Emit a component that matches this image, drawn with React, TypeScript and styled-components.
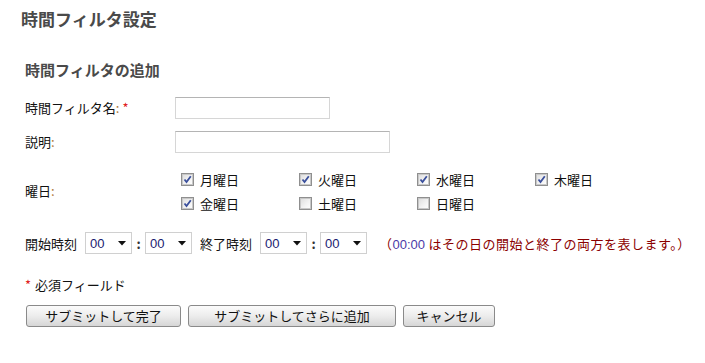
import React from "react";
import styled, { createGlobalStyle } from "styled-components";

const Global = createGlobalStyle`
  html, body { margin: 0; padding: 0; background: #fff; }
  body { font-family: "Noto Sans CJK JP", "Noto Sans", sans-serif; color: #000; }
`;

const Page = styled.div`
  width: 705px;
  height: 363px;
  box-sizing: border-box;
  padding: 9px 0 0 21px;
`;

const Title = styled.h1`
  margin: 0;
  font-size: 17px;
  line-height: 20px;
  font-weight: bold;
  color: #4a4a4a;
`;

const Section = styled.div`
  padding: 31px 0 0 4px;
`;

const SubTitle = styled.h2`
  margin: 0 0 17px 0;
  font-size: 15px;
  line-height: 20px;
  font-weight: bold;
  color: #4a4a4a;
`;

const Row = styled.div<{ $mb: number; $align?: string }>`
  display: grid;
  grid-template-columns: 150px auto;
  align-items: ${(p) => p.$align || "center"};
  margin-bottom: ${(p) => p.$mb}px;
`;

const Label = styled.div`
  font-size: 13px;
  line-height: 18px;
  color: #111;
`;

const Colon = styled.span`
  color: #b07a3a;
`;

const Star = styled.span`
  color: #e02020;
  margin-left: 3px;
`;

const TextInput = styled.div<{ $w: number }>`
  width: ${(p) => p.$w}px;
  height: 22px;
  box-sizing: border-box;
  border: 1px solid #d6d6d6;
  border-top-color: #b4b4b4;
  background: #fff;
`;

const Days = styled.div`
  display: grid;
  grid-template-columns: repeat(4, 118px);
  grid-auto-rows: 24px;
  padding-left: 6px;
`;

const Day = styled.label`
  display: flex;
  align-items: center;
  gap: 6px;
  font-size: 13px;
  color: #111;
`;

const Box = styled.span`
  width: 13px;
  height: 13px;
  box-sizing: border-box;
  border: 1px solid #8f8f8f;
  background: linear-gradient(135deg, #dcdcdc 0%, #f4f4f4 60%, #ffffff 100%);
  display: flex;
  align-items: center;
  justify-content: center;
  box-shadow: inset 0 0 0 1px #c8c8c8;
`;

const Check = ({ on }: { on: boolean }) => (
  <Box>
    {on && (
      <svg width="9" height="9" viewBox="0 0 9 9">
        <path d="M1.5 4.5 L3.5 7 L7.8 1.2" fill="none" stroke="#3a4f9c" strokeWidth="1.8" />
      </svg>
    )}
  </Box>
);

const TimeRow = styled.div`
  display: flex;
  align-items: center;
  height: 22px;
  margin-top: 17px;
  font-size: 13px;
  color: #111;
`;

const TimeLabel = styled.span<{ $ml?: number }>`
  margin-right: 8px;
  margin-left: ${(p) => p.$ml || 0}px;
`;

const Sel = styled.div`
  width: 47px;
  height: 22px;
  box-sizing: border-box;
  border: 1px solid #d0d0d0;
  background: #fff;
  display: flex;
  align-items: center;
  justify-content: space-between;
  padding: 0 5px 0 4px;
  font-family: "Liberation Sans", Arial, sans-serif;
  font-size: 13px;
  color: #1a1a70;
`;

const Select = () => (
  <Sel>
    <span>00</span>
    <svg width="8" height="5" viewBox="0 0 8 5">
      <path d="M0 0 L8 0 L4 4.5 Z" fill="#111" />
    </svg>
  </Sel>
);

const TimeColon = styled.span`
  width: 13px;
  text-align: center;
  font-weight: bold;
  color: #333;
`;

const Note = styled.span`
  margin-left: 12px;
  color: #8b0000;
  letter-spacing: 0.5px;
`;

const NoteTime = styled.span`
  color: #4a3aa8;
  font-family: "Liberation Sans", Arial, sans-serif;
  letter-spacing: 0;
`;

const Required = styled.div`
  margin-top: 22px;
  font-size: 13px;
  line-height: 18px;
  color: #111;
`;

const ReqStar = styled.span`
  color: #e02020;
  margin-right: 4px;
`;

const Buttons = styled.div`
  display: flex;
  gap: 7px;
  margin-top: 11px;
  padding-left: 1px;
`;

const Button = styled.button<{ $w: number }>`
  width: ${(p) => p.$w}px;
  height: 22px;
  padding: 0;
  border: 1px solid #8a8a8a;
  border-radius: 3px;
  background: linear-gradient(#fbfbfb 0%, #ececec 50%, #d6d6d6 100%);
  font-family: "Noto Sans CJK JP", sans-serif;
  font-size: 13px;
  line-height: 18px;
  color: #111;
`;

const days: [string, boolean][] = [
  ["月曜日", true],
  ["火曜日", true],
  ["水曜日", true],
  ["木曜日", true],
  ["金曜日", true],
  ["土曜日", false],
  ["日曜日", false],
];

export default function App() {
  return (
    <>
      <Global />
      <Page>
        <Title>時間フィルタ設定</Title>
        <Section>
          <SubTitle>時間フィルタの追加</SubTitle>
          <Row $mb={12}>
            <Label>
              時間フィルタ名<Colon>:</Colon>
              <Star>*</Star>
            </Label>
            <TextInput $w={155} />
          </Row>
          <Row $mb={14}>
            <Label>
              説明<Colon>:</Colon>
            </Label>
            <TextInput $w={215} />
          </Row>
          <Row $mb={0}>
            <Label>
              曜日<Colon>:</Colon>
            </Label>
            <Days>
              {days.map(([d, on]) => (
                <Day key={d}>
                  <Check on={on} />
                  {d}
                </Day>
              ))}
            </Days>
          </Row>
          <TimeRow>
            <TimeLabel>開始時刻</TimeLabel>
            <Select />
            <TimeColon>:</TimeColon>
            <Select />
            <TimeLabel $ml={8}>終了時刻</TimeLabel>
            <Select />
            <TimeColon>:</TimeColon>
            <Select />
            <Note>
              （<NoteTime>00:00</NoteTime> はその日の開始と終了の両方を表します。）
            </Note>
          </TimeRow>
          <Required>
            <ReqStar>*</ReqStar>必須フィールド
          </Required>
          <Buttons>
            <Button $w={155}>サブミットして完了</Button>
            <Button $w={208}>サブミットしてさらに追加</Button>
            <Button $w={92}>キャンセル</Button>
          </Buttons>
        </Section>
      </Page>
    </>
  );
}
